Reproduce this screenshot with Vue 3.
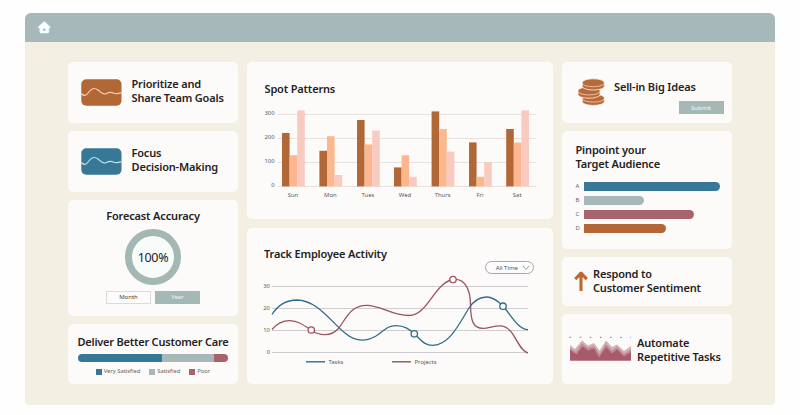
<script setup>
const days = [
  { name: 'Sun', x: 282, tops: [133, 155.2, 110.4] },
  { name: 'Mon', x: 319.4, tops: [150.8, 136.2, 175] },
  { name: 'Tues', x: 357, tops: [120, 144.4, 130.6] },
  { name: 'Wed', x: 394, tops: [167.4, 155.2, 176.8] },
  { name: 'Thurs', x: 431.6, tops: [111.4, 129, 151.6] },
  { name: 'Fri', x: 469, tops: [142.4, 176.8, 162.4] },
  { name: 'Sat', x: 506.2, tops: [129, 142.6, 110.4] },
]
const barColors = ['#b16836', '#fcb78f', '#f9cbc0']
const barGrid = [
  { label: '300', y: 114.5 },
  { label: '200', y: 138.5 },
  { label: '100', y: 162.5 },
  { label: '0', y: 186.5 },
]
const lineGrid = [
  { label: '30', y: 286.5 },
  { label: '20', y: 308.5 },
  { label: '10', y: 330.5 },
  { label: '0', y: 352.5 },
]
const audience = [
  { name: 'A', width: 136, color: '#367896' },
  { name: 'B', width: 59.5, color: '#a7b8bb' },
  { name: 'C', width: 110, color: '#a9636d' },
  { name: 'D', width: 81.5, color: '#b46735' },
]
const care = [
  { name: 'Very Satisfied', width: 84, color: '#367896' },
  { name: 'Satisfied', width: 52, color: '#a7b8bb' },
  { name: 'Poor', width: 14, color: '#a9636d' },
]
const coins = [
  { x: 593.3, y: 97.8 },
  { x: 589, y: 90.6 },
  { x: 593.3, y: 82.4 },
]
</script>

<template>
  <div class="window">
    <header class="topbar">
      <svg class="home" width="14" height="14" viewBox="0 0 14 14">
        <path d="M7.300 .5 13 5.700v1.200h-1.200v3.900q0 1.200-1.200 1.200H4Q2.800 12 2.800 10.800V6.900H1.400V5.700Z" fill="#f6ffff" stroke="#f6ffff" stroke-width=".5" stroke-linejoin="round" />
        <circle cx="7.300" cy="8.800" r="1.200" fill="#a7b8bb" />
      </svg>
    </header>
    <main class="board">
      <div class="col left">
        <section class="card tile">
          <svg width="41" height="27" viewBox="0 0 41 27">
            <rect x=".3" y=".3" width="40.200" height="26.400" rx="5" fill="#b16836" />
            <path d="M.5 14.500C3 17.500 5 17 7.500 13.500C10 9.800 13 8 17 11C20 13.500 22 16.500 25.500 14.500C29 12.500 30.500 13 33 14.300C35.500 15.500 38 14 40.500 13.600" fill="none" stroke="#fbd0ae" stroke-width="1.200" />
          </svg>
          <h2>Prioritize and<br />Share Team Goals</h2>
        </section>
        <section class="card tile">
          <svg width="41" height="27" viewBox="0 0 41 27">
            <rect x=".3" y=".3" width="40.200" height="26.400" rx="5" fill="#367896" />
            <path d="M.5 14.500C3 17.500 5 17 7.500 13.500C10 9.800 13 8 17 11C20 13.500 22 16.500 25.500 14.500C29 12.500 30.500 13 33 14.300C35.500 15.500 38 14 40.500 13.600" fill="none" stroke="#c0e3ee" stroke-width="1.200" />
          </svg>
          <h2>Focus<br />Decision-Making</h2>
        </section>
        <section class="card forecast">
          <h2>Forecast Accuracy</h2>
          <div class="ring">100%</div>
          <div class="toggle"><button>Month</button><button class="on">Year</button></div>
        </section>
        <section class="card care">
          <h2>Deliver Better Customer Care</h2>
          <div class="meter">
            <i v-for="c in care" :key="c.name" :style="{ width: c.width + 'px', background: c.color }"></i>
          </div>
          <div class="keys">
            <span v-for="c in care" :key="c.name"><i :style="{ background: c.color }"></i>{{ c.name }}</span>
          </div>
        </section>
      </div>

      <div class="col middle">
        <section class="card chart">
          <h2>Spot Patterns</h2>
          <svg class="plot" width="306" height="106" viewBox="247 102 306 106">
            <g v-for="g in barGrid" :key="g.label">
              <path :d="`M278 ${g.y}H536`" stroke="#e9dfdc" />
              <text x="274.500" :y="g.y + .2" text-anchor="end">{{ g.label }}</text>
            </g>
            <g v-for="d in days" :key="d.name">
              <rect v-for="(t, i) in d.tops" :key="i" :x="d.x + i * 7.6" :y="t" width="7.600" :height="186.4 - t" :fill="barColors[i]" />
              <text :x="d.x + 11" y="197" text-anchor="middle">{{ d.name }}</text>
            </g>
          </svg>
        </section>
        <section class="card chart activity">
          <div class="row">
            <h2>Track Employee Activity</h2>
            <button class="select">
              All Time
              <svg width="8" height="6" viewBox="0 0 8 6"><path d="M1 1l3 3.500L7 1" fill="none" stroke="#888" stroke-width=".8" /></svg>
            </button>
          </div>
          <svg class="plot" width="306" height="98" viewBox="247 274 306 98">
            <g v-for="g in lineGrid" :key="g.label">
              <path :d="`M272 ${g.y}H528`" stroke="#cfcdd1" />
              <text x="270" :y="g.y + 1.2" text-anchor="end">{{ g.label }}</text>
            </g>
            <g fill="none" stroke-width="1.300">
              <path stroke="#98565f" d="M272 329.500C277 323.500 283 320.600 290 320.700C299 321 304 325.500 311 330C320 336.500 331 336.500 338.500 328.500C346 319 350 305.300 367 305.300C380 305.300 392 315.500 409 315.500C428 315.500 434 283 453 279.500C464 278 470.500 288 470.500 305C470.800 321 473 328.300 483 328.300C489 328.300 494 325.500 501 325.800C515 327 517 350 528 353" />
              <path stroke="#306d86" d="M272 314.500C278 305 286 300 297 300C318 300.500 331 322 345 333C355 341.500 366 341.800 376 336C385 330.500 386 326 396 325.600C405 325.500 410 330 414 333.500C421 340 424 345.400 433 345.400C450 344.500 459 324 469 308C474 300.500 479 297 486.500 297C493 297 498 301 503 306C511 315 518 329.500 528 329.600" />
            </g>
            <g fill="#fdfafc" stroke-width="1.300">
              <circle cx="311.300" cy="330" r="3.200" stroke="#a0525f" />
              <circle cx="453" cy="279.600" r="3.200" stroke="#a0525f" />
              <circle cx="414.300" cy="333.800" r="3.200" stroke="#306d86" />
              <circle cx="503" cy="306.200" r="3.200" stroke="#306d86" />
            </g>
            <path d="M306 361.800H325" stroke="#367896" stroke-width="1.500" />
            <path d="M392 361.800H411" stroke="#80696a" stroke-width="1.500" />
            <text x="328.500" y="364">Tasks</text>
            <text x="414.500" y="364">Projects</text>
          </svg>
        </section>
      </div>

      <div class="col right">
        <section class="card ideas">
          <svg width="28" height="28" viewBox="577 78 28 28">
            <g v-for="(c, i) in coins" :key="i">
              <path :d="`M${c.x - 11} ${c.y}v4a11 3.600 0 0 0 22 0v-4a11 3.600 0 0 0 -22 0z`" fill="#b96a39" stroke="#fdf3ec" stroke-width=".8" />
              <path :d="`M${c.x - 10.8} ${c.y + .9}a10.800 3.400 0 0 0 21.600 0`" fill="none" stroke="#f6d3b8" stroke-width=".8" />
            </g>
          </svg>
          <div class="pitch">
            <h2>Sell-in Big Ideas</h2>
            <button class="submit">Submit</button>
          </div>
        </section>
        <section class="card audience">
          <h2>Pinpoint your<br />Target Audience</h2>
          <div class="bars">
            <div v-for="a in audience" :key="a.name" class="bar">
              <b>{{ a.name }}</b><i :style="{ width: a.width + 'px', background: a.color }"></i>
            </div>
          </div>
        </section>
        <section class="card respond">
          <svg width="14" height="20" viewBox="0 0 14 20">
            <path d="M7 19V2.500M2.300 7 7 2.200l4.700 4.800" fill="none" stroke="#b9682f" stroke-width="3.100" stroke-linecap="square" stroke-linejoin="round" />
          </svg>
          <h2>Respond to<br />Customer Sentiment</h2>
        </section>
        <section class="card automate">
          <svg width="62" height="25" viewBox="569 336 62 25">
            <path d="M569.500 337.400H631.500" stroke="#9c9095" stroke-width="1.200" stroke-dasharray="1.500 8.660" />
            <path d="M570 360.500V345L575 349L582 340.500L588 345.500L594 343L599.500 350.500L606 340.500L612 347L617 344.500L624 351L631 346V360.500Z" fill="#d3b0b7" />
            <path d="M570 360.500V348L576 352L582 343.500L588 348L594 346L599.500 354L606 344L612 350.500L617 347L624 354L631 349.500V360.500Z" fill="#c08a94" />
            <path d="M570 360.500V350L576.500 354.500L582.500 346.500L588 350.500L594 348.500L599 357.500L606 347L612 353.500L617 349.500L624 356.500L631 352V360.500Z" fill="#a85a6a" />
          </svg>
          <h2>Automate<br />Repetitive Tasks</h2>
        </section>
      </div>
    </main>
  </div>
</template>

<style>
body { background: #fefefe; }
</style>

<style scoped>
.window {
  width: 750px;
  height: 392px;
  margin: 13px 0 0 25px;
  box-sizing: border-box;
  overflow: hidden;
  border-radius: 6px 6px 4px 4px;
  background: #f3efe2;
  color: #252222;
  font-family: "Noto Sans", "Open Sans", sans-serif;
}
.topbar { height: 29px; background: #a7b8bb; display: flex; padding: 8px 0 0 12px; box-sizing: border-box; }
.board { display: flex; gap: 9px; padding: 20px 43px 0; }
.col { display: grid; gap: 8.500px; height: 322px; }
.left { width: 170px; grid-template-rows: 60.500px 60.500px 115.500px 60px; }
.middle { width: 306px; gap: 9px; grid-template-rows: 156.500px 156.500px; }
.right { width: 170px; gap: 8px; grid-template-rows: 61px 118px 49px 70px; }
.card { background: #fdfbfa; border-radius: 5px; box-sizing: border-box; min-width: 0; }
h2 { margin: 0; font-size: 11px; line-height: 13.500px; font-weight: 600; letter-spacing: -.17px; white-space: nowrap; }
button { font: 6px "Noto Sans", sans-serif; padding: 0; border: 0; box-sizing: border-box; }
.tile { display: flex; align-items: flex-start; gap: 9.500px; padding: 17px 0 0 13px; }
.tile h2 { margin-top: -1.600px; }
.forecast { display: flex; flex-direction: column; align-items: center; padding-top: 9.400px; }
.ring {
  width: 56px; height: 56px; box-sizing: border-box; margin-top: 6.600px;
  border: 7.500px solid #a4b8b3; border-radius: 50%; background: #f7fcfb;
  display: flex; align-items: center; justify-content: center; font-size: 12.500px; letter-spacing: -.3px;
}
.toggle { display: flex; gap: 4px; margin-top: 5.500px; }
.toggle button { width: 45px; height: 13px; background: #fdfcfd; border: 1px solid #dcdadd; color: #444; }
.toggle .on { background: #a4b8b5; border-color: #a4b8b5; color: #f4fafa; }
.care { display: flex; flex-direction: column; align-items: center; padding-top: 11.400px; }
.care h2 { letter-spacing: -.22px; }
.meter { display: flex; width: 150px; height: 8px; margin-top: 5px; overflow: hidden; border-radius: 4px; }
.keys { display: flex; gap: 9px; margin-top: 5.500px; font-size: 5.900px; letter-spacing: -.05px; line-height: 9px; color: #666; }
.keys span { display: flex; align-items: center; gap: 2px; white-space: nowrap; }
.keys i { width: 6px; height: 6px; }
.chart { padding: 20px 0 0 17.500px; }
.plot { display: block; margin: 6.500px 0 0 -17.500px; }
.plot text { font-size: 5.900px; fill: #5c5858; }
.row { display: flex; justify-content: space-between; padding-right: 19px; height: 26.500px; }
.select {
  width: 49px; height: 13px; margin-top: 14px; border: 1px solid #aaa6a8; border-radius: 7px;
  background: #fdfcfd; color: #555; display: flex; align-items: center; justify-content: flex-end; gap: 4px; padding-right: 3px; white-space: nowrap;
}
.activity { padding-top: 19.500px; padding-left: 17px; }
.activity .plot { margin: 0 0 0 -17px; }
.ideas { display: flex; gap: 9px; padding: 16px 8.500px 0 15px; }
.pitch { flex: 1; display: flex; flex-direction: column; padding-top: 2px; }
.submit { align-self: flex-end; width: 45px; height: 13px; margin-top: 7.500px; background: #a4b8b5; color: #f4fafa; }
.audience { padding: 12.400px 0 0 13.500px; }
.bars { display: grid; gap: 5px; margin-top: 11.600px; }
.bar { display: flex; align-items: center; height: 9px; }
.bar b { width: 8.500px; font-size: 6px; font-weight: 400; color: #666; }
.bar i { height: 9px; border-radius: 0 5px 5px 0; }
.respond { display: flex; gap: 5.500px; padding: 10.400px 0 0 11.500px; }
.respond svg { margin-top: 3.600px; }
.automate { display: flex; gap: 6px; padding: 22px 0 0 7px; }
</style>
